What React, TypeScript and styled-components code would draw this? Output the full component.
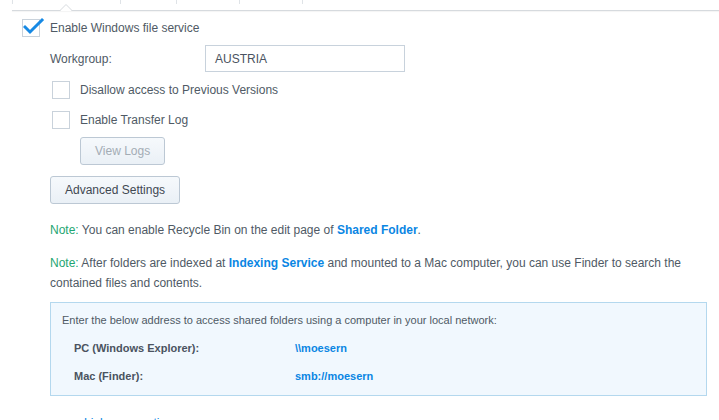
import styled, { createGlobalStyle } from 'styled-components';

const GlobalStyle = createGlobalStyle`
  html, body {
    margin: 0;
    padding: 0;
    background: #fff;
  }
  body {
    font-family: "Liberation Sans", Arial, sans-serif;
    font-size: 12px;
    color: #4f5a65;
  }
`;

const Page = styled.div`
  width: 719px;
  height: 420px;
  overflow: hidden;
`;

const TabStrip = styled.div`
  position: relative;
  margin-left: 12px;
  height: 10px;
  display: flex;
  border-bottom: 1px solid #d6dade;
  box-shadow: 0 1px 1px rgba(0, 0, 0, 0.04);
`;

const Tab = styled.div<{ $w: number }>`
  width: ${p => p.$w}px;
  height: 4px;
  border-left: 1px solid #dfe3e7;
`;

const Notch = styled.div`
  position: absolute;
  left: 48px;
  bottom: -1px;
  width: 12px;
  height: 7px;
  svg {
    display: block;
  }
`;

const Form = styled.div`
  display: flex;
  flex-direction: column;
  padding-top: 2px;
`;

const CheckRow = styled.label<{ $indent: number }>`
  display: flex;
  align-items: center;
  height: 30px;
  padding-left: ${p => p.$indent}px;
`;

const Box = styled.span`
  position: relative;
  box-sizing: border-box;
  width: 18px;
  height: 18px;
  border: 1px solid #c9d2db;
  background: #fff;
  margin-right: 10px;
  flex: none;
`;

const Tick = styled.svg`
  position: absolute;
  left: 0px;
  top: -3px;
`;

const FieldRow = styled.div`
  display: flex;
  align-items: center;
  padding-left: 50px;
  margin-top: 2px;
  margin-bottom: 3px;
`;

const FieldLabel = styled.span`
  width: 155px;
`;

const TextInput = styled.div`
  box-sizing: border-box;
  width: 200px;
  height: 27px;
  border: 1px solid #c8d2dc;
  padding: 0 9px;
  display: flex;
  align-items: center;
  color: #4a5360;
`;

const Button = styled.button<{ $indent: number; $top: number; $disabled?: boolean }>`
  box-sizing: border-box;
  align-self: flex-start;
  margin-left: ${p => p.$indent}px;
  margin-top: ${p => p.$top}px;
  height: 28px;
  padding: 0 14px;
  border: 1px solid #bcc8d4;
  border-radius: 3px;
  background: linear-gradient(#f6f9fc, #eaf0f6);
  font-family: "Liberation Sans", Arial, sans-serif;
  font-size: 12px;
  color: ${p => (p.$disabled ? '#a3acb5' : '#3f4852')};
`;

const Note = styled.p<{ $top: number }>`
  margin: ${p => p.$top}px 0 0 50px;
  width: 650px;
  line-height: 20px;
`;

const NoteTag = styled.span`
  color: #1ea672;
`;

const Link = styled.a`
  color: #0a86e3;
  font-weight: bold;
  text-decoration: none;
`;

const InfoBox = styled.div`
  box-sizing: border-box;
  margin: 9px 0 0 50px;
  width: 657px;
  height: 94px;
  border: 1px solid #b4d8ee;
  background: #f1f8fe;
  padding: 7px 11px 0;
  display: flex;
  flex-direction: column;
  gap: 8px;
`;

const InfoLine = styled.div`
  line-height: 20px;
  font-size: 11px;
`;

const AddrRow = styled.div`
  display: flex;
  padding-left: 12px;
  line-height: 20px;
  font-size: 11px;
  font-weight: bold;
`;

const AddrLabel = styled.span`
  width: 221px;
  color: #4a5360;
`;

const Footer = styled.div`
  margin: 17px 0 0 84px;
  line-height: 20px;
  color: #0a86e3;
`;

function Checkbox({ checked }: { checked?: boolean }) {
  return (
    <Box>
      {checked && (
        <Tick width="22" height="18" viewBox="0 0 22 18">
          <path d="M2 10 L7 15 L19 3" fill="none" stroke="#1689e4" strokeWidth="3" strokeLinecap="square" />
        </Tick>
      )}
    </Box>
  );
}

export default function App() {
  return (
    <Page>
      <GlobalStyle />
      <TabStrip>
        <Tab $w={107} />
        <Tab $w={55} />
        <Tab $w={62} />
        <Tab $w={62} />
        <Tab $w={10} />
        <Notch>
          <svg width="12" height="7" viewBox="0 0 12 7">
            <path d="M0 6.5 L6 0.5 L12 6.5" fill="#fff" stroke="#d6dade" strokeWidth="1" />
            <rect x="1" y="6" width="10" height="1" fill="#fff" />
          </svg>
        </Notch>
      </TabStrip>
      <Form>
        <CheckRow $indent={22}>
          <Checkbox checked />
          Enable Windows file service
        </CheckRow>
        <FieldRow>
          <FieldLabel>Workgroup:</FieldLabel>
          <TextInput>AUSTRIA</TextInput>
        </FieldRow>
        <CheckRow $indent={52}>
          <Checkbox />
          Disallow access to Previous Versions
        </CheckRow>
        <CheckRow $indent={52}>
          <Checkbox />
          Enable Transfer Log
        </CheckRow>
        <Button $indent={80} $top={2} $disabled>View Logs</Button>
        <Button $indent={50} $top={11}>Advanced Settings</Button>
        <Note $top={16}>
          <NoteTag>Note:</NoteTag> You can enable Recycle Bin on the edit page of <Link>Shared Folder</Link>.
        </Note>
        <Note $top={13}>
          <NoteTag>Note:</NoteTag> After folders are indexed at <Link>Indexing Service</Link> and mounted to a Mac computer, you can use Finder to search the contained files and contents.
        </Note>
        <InfoBox>
          <InfoLine>Enter the below address to access shared folders using a computer in your local network:</InfoLine>
          <AddrRow>
            <AddrLabel>PC (Windows Explorer):</AddrLabel>
            <Link>\\moesern</Link>
          </AddrRow>
          <AddrRow>
            <AddrLabel>Mac (Finder):</AddrLabel>
            <Link>smb://moesern</Link>
          </AddrRow>
        </InfoBox>
        <Footer>Link aggregation</Footer>
      </Form>
    </Page>
  );
}
